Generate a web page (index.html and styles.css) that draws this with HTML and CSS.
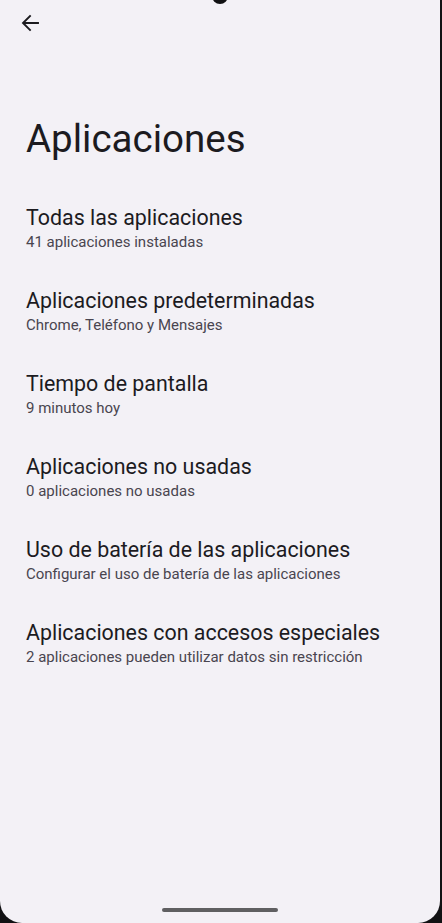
FILE: index.html
```html
<!DOCTYPE html>
<html lang="es">
<head>
<meta charset="utf-8">
<title>Aplicaciones</title>
<link rel="stylesheet" href="styles.css">
</head>
<body>
<div class="screen">
  <div class="camera"></div>
  <div class="topbar">
    <button class="back" aria-label="Atrás">
      <svg width="24" height="24" viewBox="0 0 24 24"><path d="M20 12H5.5M12 5l-7 7 7 7" fill="none" stroke="#1c1b1f" stroke-width="1.9" stroke-linecap="square" stroke-linejoin="miter"/></svg>
    </button>
  </div>
  <h1 class="title">Aplicaciones</h1>
  <ul class="list">
    <li class="item"><div class="item-title">Todas las aplicaciones</div><div class="item-sub">41 aplicaciones instaladas</div></li>
    <li class="item"><div class="item-title">Aplicaciones predeterminadas</div><div class="item-sub">Chrome, Teléfono y Mensajes</div></li>
    <li class="item"><div class="item-title">Tiempo de pantalla</div><div class="item-sub">9 minutos hoy</div></li>
    <li class="item"><div class="item-title">Aplicaciones no usadas</div><div class="item-sub">0 aplicaciones no usadas</div></li>
    <li class="item"><div class="item-title">Uso de batería de las aplicaciones</div><div class="item-sub">Configurar el uso de batería de las aplicaciones</div></li>
    <li class="item"><div class="item-title">Aplicaciones con accesos especiales</div><div class="item-sub">2 aplicaciones pueden utilizar datos sin restricción</div></li>
  </ul>
  <div class="spacer"></div>
  <div class="navbar"><div class="handle"></div></div>
</div>
</body>
</html>
```

FILE: styles.css
```css
html, body {
  margin: 0;
  padding: 0;
  background: #111113;
}
body {
  width: 442px;
  height: 923px;
  overflow: hidden;
  font-family: Roboto, "Noto Sans", sans-serif;
}
.screen {
  position: relative;
  width: 440px;
  height: 923px;
  background: #f3f1f6;
  border-radius: 0 0 22px 22px;
  display: flex;
  flex-direction: column;
  overflow: hidden;
}
.camera {
  position: absolute;
  left: 212px;
  top: -12px;
  width: 16px;
  height: 16px;
  border-radius: 50%;
  background: #111113;
}
.topbar {
  height: 48px;
  box-sizing: border-box;
  padding: 11px 0 0 18px;
}
.back {
  display: block;
  width: 24px;
  height: 24px;
  padding: 0;
  border: 0;
  background: none;
}
.back svg { display: block; }
.title {
  margin: 68px 0 0 26px;
  font-size: 38.5px;
  line-height: 46px;
  font-weight: 400;
  color: #1c1b1f;
}
.list {
  list-style: none;
  margin: 24px 0 0;
  padding: 0;
}
.item {
  padding: 17.5px 26px;
}
.item-title {
  font-size: 21.4px;
  line-height: 28px;
  color: #1c1b1f;
}
.item-sub {
  font-size: 15px;
  line-height: 20px;
  color: #49454f;
}
.spacer { flex: 1; }
.navbar {
  height: 15px;
  display: flex;
  justify-content: center;
}
.handle {
  width: 116px;
  height: 4px;
  border-radius: 2px;
  background: #5f5f61;
}
```
